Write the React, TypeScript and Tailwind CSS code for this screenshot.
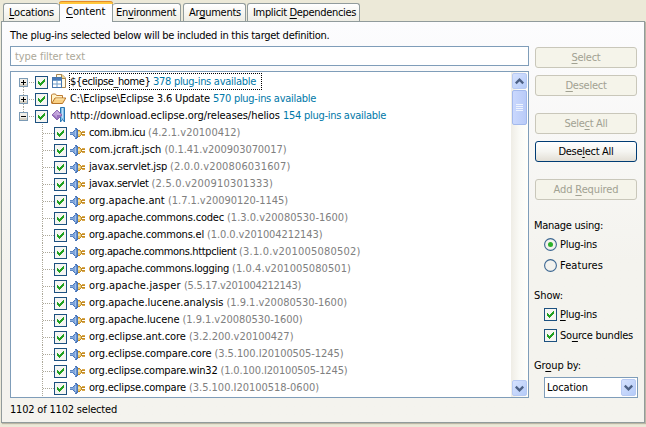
import { useLayoutEffect, useRef, useState, type ReactNode } from "react";

/* Label stretched to a given width; "_" marks the mnemonic that follows it when mnemonic is set. */
function Label({ text, w, className = "", mnemonic = false }: { text: string; w: number; className?: string; mnemonic?: boolean }) {
  const ref = useRef<HTMLSpanElement>(null);
  const [spacing, setSpacing] = useState(0);
  const at = mnemonic ? text.indexOf("_") : -1;
  const plain = at >= 0 ? text.slice(0, at) + text.slice(at + 1) : text;
  useLayoutEffect(() => {
    const el = ref.current;
    if (!el) return;
    el.style.letterSpacing = "0px";
    const s = (w - el.getBoundingClientRect().width) / plain.length;
    el.style.letterSpacing = `${s}px`;
    setSpacing(s);
  }, [plain, w]);
  return (
    <span ref={ref} className={`inline-block shrink-0 whitespace-pre ${className}`} style={{ letterSpacing: spacing }}>
      {at >= 0 ? (
        <>
          {plain.slice(0, at)}
          <span className="underline decoration-1 underline-offset-[2px]">{plain[at]}</span>
          {plain.slice(at + 1)}
        </>
      ) : (
        plain
      )}
    </span>
  );
}

function Check() {
  return (
    <svg className="block shrink-0" width="13" height="13" viewBox="0 0 13 13" shapeRendering="crispEdges">
      <rect width="13" height="13" fill="#1c5180" />
      <rect x="1" y="1" width="11" height="11" fill="#f5f5f2" />
      <path d="M3 5h1v1h1v1h1v-1h1v-1h1v-1h1v-1h1v3h-1v1h-1v1h-1v1h-1v1h-1v-1h-1v-1h-1z" fill="#21a121" />
    </svg>
  );
}

function Expander({ open }: { open: boolean }) {
  return (
    <svg className="block shrink-0" width="9" height="9" shapeRendering="crispEdges">
      <rect x=".5" y=".5" width="8" height="8" fill="#f1efe9" stroke="#7b9ab5" />
      <path d="M1 6h7v2h-7z" fill="#d5d0c3" />
      <path d="M2 4h5v1h-5z" fill="#000" />
      {!open && <path d="M4 2h1v5h-1z" fill="#000" />}
    </svg>
  );
}

function PlugIcon() {
  return (
    <svg className="block shrink-0" width="16" height="13" viewBox="0 0 16 13" shapeRendering="crispEdges">
      <path d="M0 5h3v3h-3z" fill="#5b86c2" />
      <path d="M0 6h3v1h-3z" fill="#8fb0de" />
      <path d="M3 4h1v5h-1zM4 3h1v7h-1zM5 1h2v11h-2zM7 2h1v9h-1z" fill="#4a76b8" />
      <path d="M4 4h1v5h-1zM5 2h1v9h-1zM3 5h1v3h-1z" fill="#7ba3db" />
      <path d="M5 4h1v5h-1z" fill="#a3c2ec" />
      <path d="M6 3h1v7h-1z" fill="#6690cd" />
      <path d="M8 3h2v1h1v1h1v3h-1v1h-1v1h-2z" fill="#c08a26" />
      <path d="M8 4h2v5h-2zM10 5h1v3h-1z" fill="#ecc868" />
      <path d="M8 5h2v2h-2z" fill="#f8e4a4" />
      <path d="M12 4h3v1h-3zM12 8h3v1h-3z" fill="#dca94a" />
      <path d="M12 5h3v1h-3zM12 7h3v1h-3z" fill="#c08a26" />
    </svg>
  );
}

function TargetIcon() {
  return (
    <svg className="block" width="16" height="16" viewBox="0 0 16 16">
      <path d="M5.5.5h5.5l3.5 3.5v9.5h-9z" fill="#fffae8" stroke="#a88651" />
      <path d="M10.5.5v4h4" fill="#f2d88c" stroke="#a88651" />
      <rect x="1.5" y="3.5" width="9" height="10" fill="#fff" stroke="#4676ad" />
      <path d="M2 4h8v2h-8z" fill="#4979b7" />
      <path d="M2 6.5h8M2 10h8M6 7v6" stroke="#6f9cc8" />
    </svg>
  );
}

function FolderIcon() {
  return (
    <svg className="block" width="16" height="16" viewBox="0 0 16 16">
      <path d="M.5 12v-8l1-1h3l1 1.5h6v3" fill="#fff3c9" stroke="#bc7c34" />
      <path d="M.8 12.5l3.2-5.5h10.8l-3.3 5.5z" fill="#f9d083" stroke="#b87528" />
      <path d="M4.6 8h8.6" stroke="#ffecb8" />
    </svg>
  );
}

function SiteIcon() {
  return (
    <svg className="-mt-px block" width="16" height="16" viewBox="0 0 16 16">
      <path d="M9.5.5h4v14.5l-2-2.5-2 2.5z" fill="#84bde8" stroke="#2876b3" />
      <path d="M11.5 1v10" stroke="#c0e2f8" />
      <path d="M6 3l5 5-5 5-5-5z" fill="#9872bd" stroke="#8d68b2" />
      <path d="M6 3.5l4.2 4.5h-8.4z" fill="#c8acdf" />
      <path d="M3 8l3-3v6z" fill="#bb9cd8" />
    </svg>
  );
}

const roots: { icon: ReactNode; name: string; nameW: number; info: string; open: boolean; focus: boolean }[] = [
  { icon: <TargetIcon />, name: "${eclipse_home} ", nameW: 83, info: "378 plug-ins available", open: false, focus: true },
  { icon: <FolderIcon />, name: "C:\\Eclipse\\Eclipse 3.6 Update ", nameW: 143, info: "570 plug-ins available", open: false, focus: false },
  { icon: <SiteIcon />, name: "http://download.eclipse.org/releases/helios ", nameW: 213, info: "154 plug-ins available", open: true, focus: false },
];

const plugins: [string, number, string, number][] = [
  ["com.ibm.icu ", 59, "(4.2.1.v20100412)", 92.5],
  ["com.jcraft.jsch ", 75.5, "(0.1.41.v200903070017)", 122],
  ["javax.servlet.jsp ", 81, "(2.0.0.v200806031607)", 120.5],
  ["javax.servlet ", 62.5, "(2.5.0.v200910301333)", 121.5],
  ["org.apache.ant ", 79, "(1.7.1.v20090120-1145)", 120],
  ["org.apache.commons.codec ", 138, "(1.3.0.v20080530-1600)", 121],
  ["org.apache.commons.el ", 118, "(1.0.0.v201004212143)", 115.5],
  ["org.apache.commons.httpclient ", 150, "(3.1.0.v201005080502)", 121.5],
  ["org.apache.commons.logging ", 143, "(1.0.4.v201005080501)", 119],
  ["org.apache.jasper ", 95, "(5.5.17.v201004212143)", 117],
  ["org.apache.lucene.analysis ", 137.5, "(1.9.1.v20080530-1600)", 120.5],
  ["org.apache.lucene ", 93.5, "(1.9.1.v20080530-1600)", 120],
  ["org.eclipse.ant.core ", 100, "(3.2.200.v20100427)", 104.5],
  ["org.eclipse.compare.core ", 125.5, "(3.5.100.I20100505-1245)", 129],
  ["org.eclipse.compare.win32 ", 131.5, "(1.0.100.I20100505-1245)", 127],
  ["org.eclipse.compare ", 100, "(3.5.100.I20100518-0600)", 130],
];

function HDots({ n }: { n: number }) {
  return (
    <svg className="block shrink-0" width={n} height="17">
      <path d={`M0 9.5H${n}`} stroke="#aca899" strokeDasharray="1 1" />
    </svg>
  );
}

function VDots() {
  return (
    <svg className="block shrink-0" width="1" height="17">
      <path d="M.5 0V17" stroke="#aca899" strokeDasharray="1 1" />
    </svg>
  );
}

function Tree() {
  return (
    <div className="flex min-w-0 flex-1 flex-col pt-px">
      {roots.map((r, i) => (
        <div key={r.name} className="flex h-[17px] pl-2">
          <div className="flex w-[9px] flex-col items-center">
            <div className="h-[5px] overflow-hidden">{i > 0 && <VDots />}</div>
            <Expander open={r.open} />
            <div className="h-[3px] overflow-hidden">{i < 2 && <VDots />}</div>
          </div>
          <div className="ml-px w-[6px] overflow-hidden"><HDots n={5} /></div>
          <div className="pt-[3px]"><Check /></div>
          <div className="ml-[3px] w-4 pt-px">{r.icon}</div>
          <div className={`ml-[2px] flex h-[17px] items-center leading-[15px] ${r.focus ? "w-[193px] border border-dotted border-black" : "pl-px"}`}>
            <Label text={r.name} w={r.nameW} />
            <Label text={r.info} w={103} className="text-[#0078a8]" />
          </div>
        </div>
      ))}
      {plugins.map(([name, w, ver, vw]) => (
        <div key={name} className="flex h-[17px] pl-[31px]">
          <VDots />
          <HDots n={11} />
          <div className="pt-[3px]"><Check /></div>
          <div className="ml-[3px] pt-[3px]"><PlugIcon /></div>
          <div className="ml-[3px] flex items-center leading-[17px]">
            <Label text={name} w={w} />
            <Label text={ver} w={vw} className="text-[#808080]" />
          </div>
        </div>
      ))}
    </div>
  );
}

function Chevron({ up = false }: { up?: boolean }) {
  return (
    <svg className={up ? "block" : "block rotate-180"} width="9" height="7" viewBox="0 0 9 7">
      <path d="M.8 5.4l3.7-3.7 3.7 3.7" fill="none" stroke="#4d6185" strokeWidth="2.3" />
    </svg>
  );
}

const blueButton = "flex items-center justify-center rounded-[2px] border border-[#b8caf3] bg-linear-to-br from-[#d6e2fe] to-[#b5cbf8]";

function ScrollBar() {
  return (
    <div className="flex w-[17px] shrink-0 flex-col items-center bg-linear-to-r from-[#efede6] via-[#fafaf6] to-[#fffffb] pr-px pt-px pb-px">
      <div className={`${blueButton} h-4 w-[15px]`}><Chevron up /></div>
      <div className="mt-px flex h-[35px] w-[15px] flex-col items-center justify-center gap-px rounded-[2px] border border-[#a3b9ec] bg-linear-to-r from-[#cad8fd] to-[#b9cbf8]">
        {[0, 1, 2, 3].map((k) => (
          <div key={k} className="h-px w-[7px] bg-[#eef4fe]" />
        ))}
      </div>
      <div className={`${blueButton} mt-auto h-4 w-[15px]`}><Chevron /></div>
    </div>
  );
}

function Button({ text, w, enabled = false, className = "" }: { text: string; w: number; enabled?: boolean; className?: string }) {
  return (
    <button
      className={`flex h-[21px] w-[102px] items-center justify-center rounded-[3px] border ${
        enabled ? "border-[#003c74] bg-linear-to-b from-white via-[#f5f5f1] to-[#e3dfd6] text-black" : "border-[#c9c7ba] bg-[#f5f4ea] text-[#a1a192]"
      } ${className}`}
    >
      <Label text={text} w={w} mnemonic />
    </button>
  );
}

function Radio({ on }: { on: boolean }) {
  return (
    <svg className="block shrink-0" width="13" height="13">
      <circle cx="6.5" cy="6.5" r="5.9" fill="#f3f2ee" stroke="#3b6691" strokeWidth="1.1" />
      {on && <circle cx="6.5" cy="6.5" r="2.5" fill="#2bb02b" />}
    </svg>
  );
}

function Option({ mark, text, w, className }: { mark: ReactNode; text: string; w: number; className: string }) {
  return (
    <div className={`ml-[10px] flex h-[13px] items-center gap-[3px] ${className}`}>
      {mark}
      <Label text={text} w={w} mnemonic />
    </div>
  );
}

function Tab({ text, w, className }: { text: string; w: number; className: string }) {
  return (
    <div className={`flex h-[18px] items-center rounded-t-[3px] border border-b-0 border-[#919b9c] bg-linear-to-b from-white to-[#eeede5] ${className}`}>
      <Label text={text} w={w} mnemonic />
    </div>
  );
}

export default function App() {
  return (
    <div className="flex h-[427px] w-[646px] flex-col overflow-hidden bg-[#ece9d8] pl-px font-['DejaVu_Sans_Condensed','DejaVu_Sans',sans-serif] text-[11px] leading-[13px] text-black [font-stretch:condensed]">
      <div className="flex h-[21px] items-end pl-[2px]">
        <Tab text="_Locations" w={45} className="w-[56px] border-r-0 pl-[5px]" />
        <div className="z-10 -mb-px flex h-[21px] w-[54px] flex-col rounded-t-[3px] border-x border-[#919b9c] bg-[#fcfcfe]">
          <div className="-mx-px h-[3px] shrink-0 rounded-t-[3px] border-t border-[#e68b2c] bg-[#ffc73c]" />
          <div className="pl-[6px] pt-px"><Label text="_Content" w={39.5} mnemonic /></div>
        </div>
        <Tab text="En_vironment" w={60} className="w-[68px] border-l-0 pl-[3px]" />
        <Tab text="Ar_guments" w={52} className="ml-[2px] w-[63px] pl-[5px]" />
        <Tab text="Implicit _Dependencies" w={103} className="ml-px w-[113px] pl-[5px]" />
      </div>
      <div className="flex h-[402px] w-[644px] flex-col border border-[#919b9c] bg-linear-to-b from-[#fcfcfe] to-[#f4f3ee] to-60% pl-2 shadow-[1px_1px_1px_#bab6a4]">
        <div className="mt-[6px] h-[18px] pt-px"><Label text="The plug-ins selected below will be included in this target definition." w={319.5} /></div>
        <div className="flex h-[352px]">
          <div className="flex w-[519px] flex-col">
            <div className="flex h-5 items-center border border-[#7f9db9] bg-white pl-1 text-[#aca899]">
              <Label text="type filter text" w={70} />
            </div>
            <div className="mt-[5px] flex h-[327px] border border-[#7f9db9] bg-white">
              <Tree />
              <ScrollBar />
            </div>
          </div>
          <div className="flex w-[110px] flex-col pl-[5px] pt-px">
            <div className="ml-px flex flex-col">
              <Button text="_Select" w={29} />
              <Button text="_Deselect" w={41} className="mt-[7px]" />
              <Button text="Sele_ct All" w={43} className="mt-[17px]" />
              <Button text="Dese_lect All" w={55} enabled className="mt-[7px]" />
              <Button text="Add _Required" w={65} className="mt-[17px]" />
            </div>
            <div className="mt-[19px] h-[13px]"><Label text="Manage using:" w={69} /></div>
            <Option mark={<Radio on />} text="Plug-ins" w={37} className="mt-[6px]" />
            <Option mark={<Radio on={false} />} text="Features" w={43} className="mt-2" />
            <div className="mt-[17px] h-[13px]"><Label text="Show:" w={29} /></div>
            <Option mark={<Check />} text="_Plug-ins" w={37} className="mt-[6px]" />
            <Option mark={<Check />} text="So_urce bundles" w={73} className="mt-2" />
            <div className="mt-[17px] h-[13px]"><Label text="Gr_oup by:" w={47} mnemonic /></div>
            <div className="ml-[10px] mt-[5px] flex h-[21px] w-[94px] items-center justify-between border border-[#7f9db9] bg-white pl-[2px] pr-px">
              <Label text="Location" w={41} />
              <div className={`${blueButton} h-[17px] w-[15px]`}><Chevron /></div>
            </div>
          </div>
        </div>
        <div className="mt-[5px] h-[13px]"><Label text="1102 of 1102 selected" w={107} /></div>
      </div>
    </div>
  );
}
